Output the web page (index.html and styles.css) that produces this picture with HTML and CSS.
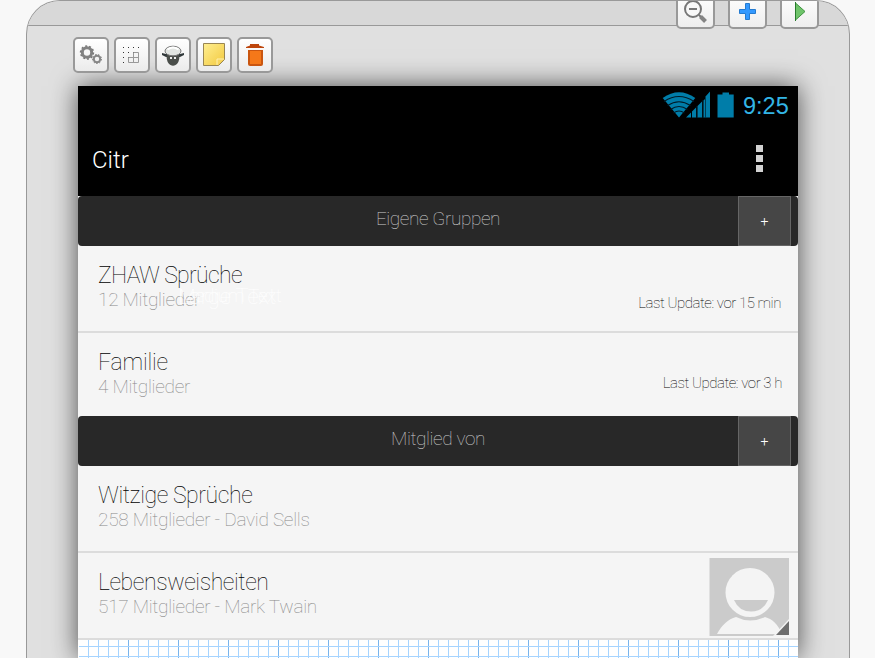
FILE: index.html
```html
<!DOCTYPE html>
<html lang="de">
<head>
<meta charset="utf-8">
<title>Citr</title>
<link rel="stylesheet" href="styles.css">
</head>
<body>
<main class="device">
  <header class="topbar">
    <button class="tab" aria-label="Verkleinern"><svg width="38" height="29" viewBox="677 0 38 29"><circle cx="693" cy="9" r="8" fill="#f8f8f8" stroke="#777" stroke-width="2"/><path d="M689 9h8" stroke="#777" stroke-width="2"/><path d="M699 15l2 2" stroke="#777" stroke-width="2"/><path d="M700.500 16.500l5 5" stroke="#858585" stroke-width="4"/></svg></button>
    <button class="tab" aria-label="Hinzufügen"><svg width="38" height="29" viewBox="729 0 38 29"><path d="M745.500 3.500h4v6h6v4h-6v6h-4v-6h-6v-4h6z" fill="#3399ff" stroke="#257bd0"/></svg></button>
    <button class="tab" aria-label="Starten"><svg width="38" height="29" viewBox="781 0 38 29"><path d="M795.500 3v17l9.500-8.500z" fill="#6fc46a" stroke="#3f9440"/><path d="M795.500 2v19" stroke="#287b2c"/></svg></button>
  </header>
  <nav class="tools">
    <button class="tool" aria-label="Einstellungen"><svg width="36" height="36" viewBox="0 0 36 36" fill="none"><circle cx="14" cy="15.500" r="4.700" stroke="#818181" stroke-width="3"/><circle cx="14" cy="15.500" r="6.500" stroke="#777" stroke-width="1.400" stroke-dasharray="2 2"/><circle cx="24" cy="22" r="3.200" stroke="#888" stroke-width="2"/><circle cx="24" cy="22" r="4.500" stroke="#777" stroke-width="1" stroke-dasharray="1.600 1.500"/></svg></button>
    <button class="tool" aria-label="Raster"><svg width="36" height="36" viewBox="0 0 36 36" fill="none"><path d="M9 10.500h17M9 15.500h12M9 20.500h7M9 25.500h2" stroke="#333" stroke-dasharray="1 4"/><path d="M19.500 15.500h5v10h-10v-5h10M19.500 15.500v10" stroke="#999"/></svg></button>
    <button class="tool" aria-label="Profil"><svg width="36" height="36" viewBox="0 0 36 36"><path d="M7 16l4 1h14l4-1v2l-4 2h-14l-4-2z" fill="#30383a"/><path d="M11.500 18h13q0 8-4 10q-2.500 1.500-5 0q-4-2-4-10" fill="#4a4e4a"/><ellipse cx="18" cy="14" rx="8" ry="4.800" fill="#e2e5e2" stroke="#777"/><path d="M12.500 12.500q5.500-4 11 0" fill="none" stroke="#fff" stroke-width="2"/><path d="M15 20h2v2h-2zM19 20h2v2h-2z" fill="#eee"/></svg></button>
    <button class="tool" aria-label="Notiz"><svg width="36" height="36" viewBox="0 0 36 36"><defs><linearGradient id="note" x1="0" y1="0" x2="1" y2="1"><stop stop-color="#ffef91"/><stop offset="1" stop-color="#f2c83e"/></linearGradient></defs><path d="M7.500 6.500h21v16l-6 6h-15z" fill="url(#note)" stroke="#998653"/><path d="M21 28v-6h7" fill="#f7d55f" stroke="#fff0ae"/></svg></button>
    <button class="tool" aria-label="Löschen"><svg width="36" height="36" viewBox="0 0 36 36"><path d="M11 13h15v14q0 2-2 2H13q-2 0-2-2z" fill="#ca5610"/><path d="M13 14h11v13H13z" fill="#f57819"/><path d="M9 11v-1l4-1.500V7h9v1.500l5 1.500v1z" fill="#bd450c"/></svg></button>
  </nav>
  <section class="screen">
    <div class="status">
      <svg width="74" height="30" viewBox="661 90 74 30"><path d="M662.700 98Q679 86.500 695.300 98L679 117.500z" fill="#007da9"/><g fill="none" stroke="#001a26" stroke-width="1.100"><path d="M664 101.500Q679 91.500 694 101.500M667.500 105.500Q679 98 690.500 105.500M670.500 109.500Q679 103.500 687.500 109.500M673.500 113Q679 109 684.500 113"/></g><path d="M686 117.500l5-5v5zM692 117.500v-6l4-4v10zM697.500 117.500v-11.500l4.500-4.500v16zM703.500 117.500v-17l1.500-1.500v18.500zM705.500 117.500v-21l4.500-5v26z" fill="#007da9"/><path d="M697 106v12M703 100v18M705.500 96v22" stroke="#003a50" stroke-width=".6"/><path d="M717.500 117.500V94.500h5V92.500h6.500v2h4.700v23z" fill="#007da9"/></svg>
      <span class="clock">9:25</span>
    </div>
    <div class="appbar"><h1 class="title">Citr</h1><div class="overflow"><i></i><i></i><i></i></div></div>
    <div class="group"><span class="gname">Eigene Gruppen</span><button class="add">+</button></div>
    <article class="row ruled">
      <div class="info"><h2 class="name tight">ZHAW Sprüche</h2><p class="sub">12 Mitglieder</p></div>
      <span class="update">Last Update: vor 15 min</span>
      <span class="ghost medium">Medium Text</span><span class="ghost large">Large Text</span>
    </article>
    <article class="row short">
      <div class="info"><h2 class="name loose">Familie</h2><p class="sub">4 Mitglieder</p></div>
      <span class="update">Last Update: vor 3 h</span>
    </article>
    <div class="group"><span class="gname">Mitglied von</span><button class="add">+</button></div>
    <article class="row ruled"><div class="info"><h2 class="name">Witzige Sprüche</h2><p class="sub">258 Mitglieder - David Sells</p></div></article>
    <article class="row ruled">
      <div class="info"><h2 class="name">Lebensweisheiten</h2><p class="sub">517 Mitglieder - Mark Twain</p></div>
      <svg class="avatar" width="80" height="78" viewBox="0 0 80 78"><path d="M.5 0H80v78H.5z" fill="#cbcbcb"/><path d="M8 76C13 67 19 61 27 59q14 7 29 0c7 2 13 7 17 17z" fill="#f4f4f4"/><circle cx="41" cy="34.500" r="24.500" fill="#f4f4f4"/><path d="M25 42h34q-5 11.500-17 11.500T25 42" fill="#cbcbcb"/><path d="M64 78l16-17v17z" fill="#f4f4f4"/><path d="M67 77l13-14v14z" fill="#6e6e6e"/></svg>
    </article>
    <div class="canvas"></div>
  </section>
</main>
</body>
</html>
```
FILE: styles.css
```css
* { box-sizing: border-box; }
body { margin: 0; height: 658px; overflow: hidden; background: #f8f8f8; font-family: Roboto, sans-serif; }
h1, h2, p { margin: 0; font-weight: 100; }
button { padding: 0; font-family: inherit; }
svg { display: block; flex: none; }
.device { width: 824px; height: 658px; margin-left: 26px; border: 1px solid #999; border-bottom: 0; border-radius: 34px 34px 0 0; background: #e0e0e0; overflow: hidden; }
.topbar { height: 25px; display: flex; justify-content: flex-end; gap: 14px; padding-right: 30px; background: #d8d8d8; border-bottom: 1px solid #999; }
.tab { width: 39px; height: 38px; margin: -10px 0 0 -1px; flex: none; display: flex; align-items: flex-end; justify-content: center; border: 2px solid #999; border-radius: 5px; background: linear-gradient(#fff, #eee); }
.tab svg { margin: 0 -2px -2px; }
.tools { display: flex; gap: 5px; padding: 11px 0 0 46px; }
.tool { width: 36px; height: 36px; border: 2px solid #999; border-radius: 5px; background: linear-gradient(#fff, #ebebeb); }
.tool svg { margin: -2px; }
.screen { width: 720px; height: 572px; margin: 13px 0 0 51px; background: #f5f5f5; box-shadow: 0 0 25px rgba(0,0,0,.66); }
.status { height: 40px; padding: 4px 9px 0 0; background: #000; display: flex; justify-content: flex-end; }
.clock { width: 54px; padding-left: 8px; font: 23.5px/32px "Liberation Sans", sans-serif; color: #33b5e5; white-space: nowrap; }
.appbar { height: 70px; background: #000; display: flex; justify-content: space-between; padding: 18px 35px 0 14px; }
.title { font-size: 24px; line-height: 32px; font-weight: 300; color: #fff; }
.overflow { display: flex; flex-direction: column; gap: 3px; padding-top: 1px; }
.overflow i { width: 7px; height: 7px; background: #d2d2d2; }
.group { height: 50px; border-radius: 4px; background: #282828; display: grid; grid-template-columns: 660px 53px; }
.gname { padding: 11px 0 0 60px; text-align: center; font-size: 19px; line-height: 24px; font-weight: 100; letter-spacing: -.4px; color: #ccc; }
.add { height: 50px; border: 1px solid #666; background: #464646; color: #fff; font-size: 14px; font-weight: 300; }
.row { position: relative; height: 85px; display: flex; justify-content: space-between; padding: 16px 17px 0 20px; }
.ruled { height: 87px; border-bottom: 2px solid #dcdcdc; }
.short { height: 83px; padding-right: 16px; }
.name { font-size: 23px; line-height: 27px; letter-spacing: -.42px; color: #000; white-space: nowrap; }
.tight { letter-spacing: -.65px; }
.loose { letter-spacing: -.2px; }
.sub { margin-top: -1px; font-size: 19px; line-height: 24px; letter-spacing: -.27px; color: #888; white-space: nowrap; }
.update { margin-top: 31px; font-size: 15px; line-height: 20px; font-weight: 100; letter-spacing: -.45px; color: #000; }
.short .update { margin-top: 24px; }
.ghost { position: absolute; font-weight: 100; color: #fff; white-space: nowrap; }
.medium { left: 101px; top: 38px; font-size: 19px; line-height: 24px; letter-spacing: -.4px; }
.large { left: 100px; top: 37px; font-size: 22px; line-height: 28px; letter-spacing: -.1px; }
.avatar { margin: -11px -8px 0 0; }
.canvas { height: 18px; border-left: 1px solid #fff; background-color: #fff; background-position: 0 6px, 49px 0, 9px 0; background-image: linear-gradient(#a6d4ff 1px, transparent 1px), linear-gradient(90deg, #79b4ec 1px, transparent 1px), linear-gradient(90deg, #a6d4ff 1px, transparent 1px); background-size: 10px 10px, 50px 50px, 10px 10px; }
```
